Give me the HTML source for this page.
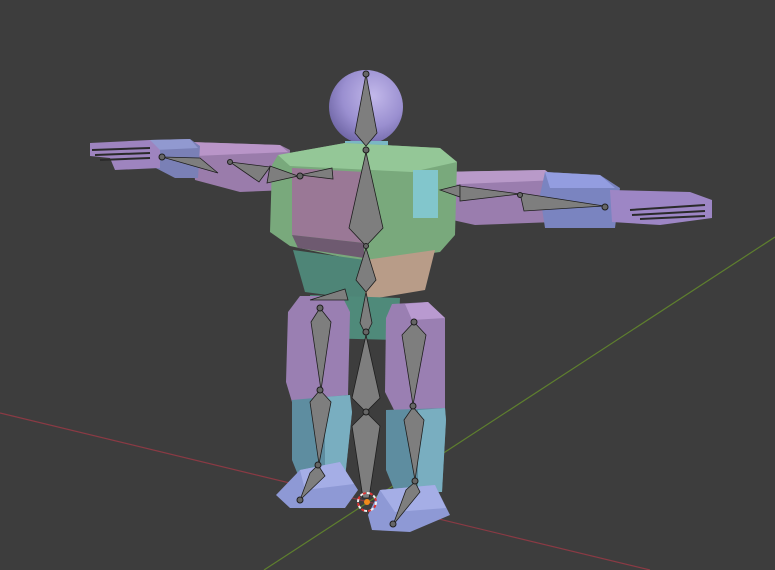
<!DOCTYPE html>
<html><head><meta charset="utf-8"><style>
html,body{margin:0;padding:0;background:#3d3d3d;width:775px;height:570px;overflow:hidden}
svg{display:block}
</style></head><body>
<svg width="775" height="570" viewBox="0 0 775 570" xmlns="http://www.w3.org/2000/svg">
<defs>
<radialGradient id="hd" cx="0.6" cy="0.35" r="0.7"><stop offset="0" stop-color="#c2b8ea"/><stop offset="0.6" stop-color="#9a8fd0"/><stop offset="1" stop-color="#6d64a3"/></radialGradient>
</defs>
<rect width="775" height="570" fill="#3d3d3d"/>
<line x1="0" y1="413" x2="650" y2="570" stroke="#8a3a44" stroke-width="1.2"/>
<line x1="264" y1="570" x2="775" y2="237" stroke="#5e7f2e" stroke-width="1.2"/>

<!-- left arm -->
<polygon points="190,142 280,145 290,150 288,190 240,192 195,180" fill="#9a7cab"/>
<polygon points="190,142 280,145 288,152 195,156" fill="#b995c8"/>
<polygon points="150,140 190,139 200,146 198,178 175,178 150,165" fill="#7a80b6"/>
<polygon points="150,140 190,139 198,148 155,150" fill="#9199d0"/>
<polygon points="90,143 150,140 160,150 160,168 115,170 110,158 90,156" fill="#9e84bf"/>
<!-- right arm -->
<polygon points="418,168 440,165 445,215 420,218" fill="#78c0c8"/>
<polygon points="435,172 545,170 560,182 555,222 475,225 430,215" fill="#9a7dae"/>
<polygon points="435,172 545,170 558,180 438,185" fill="#b99ac9"/>
<polygon points="545,172 600,175 620,188 615,228 545,228 540,195" fill="#7a84c0"/>
<polygon points="545,172 600,175 615,188 550,188" fill="#939de0"/>
<polygon points="610,190 690,192 712,200 712,218 660,225 612,222" fill="#9d86c5"/>

<!-- head -->
<circle cx="366" cy="107" r="37" fill="url(#hd)"/>
<rect x="345" y="141" width="43" height="10" fill="#7ab7c4"/>

<!-- torso -->
<polygon points="278,155 345,143 440,148 457,162 455,235 440,252 365,262 290,246 270,232 272,165" fill="#79a97c"/>
<polygon points="278,155 345,143 440,148 457,162 412,172 290,166" fill="#94c797"/>
<polygon points="292,168 364,172 364,243 292,235" fill="#9a7896"/>
<polygon points="292,235 364,243 364,258 298,248" fill="#6e5a70"/>
<rect x="413" y="170" width="25" height="48" fill="#82c6cc"/>
<!-- waist -->
<polygon points="293,250 365,260 365,300 305,292" fill="#4e8577"/>
<polygon points="365,260 435,250 425,290 365,300" fill="#b89c88"/>
<polygon points="310,295 400,298 398,340 318,338" fill="#4f8a7a"/>
<!-- legs upper -->
<polygon points="300,296 342,296 350,312 348,395 292,402 286,382 288,312" fill="#9a7fb2"/>
<polygon points="392,304 428,302 445,318 445,408 395,412 385,392 386,318" fill="#9a7fb2"/>
<polygon points="405,304 428,302 445,318 412,320" fill="#b99ad0"/>
<!-- legs lower -->
<polygon points="292,400 348,395 352,412 345,478 300,480 292,460" fill="#5e8da0"/>
<polygon points="325,397 350,395 352,412 345,478 325,478" fill="#79aec0"/>
<polygon points="386,410 445,408 446,420 442,492 395,492 386,470" fill="#5e8da0"/>
<polygon points="418,410 445,408 446,420 442,492 418,492" fill="#79aec0"/>
<!-- feet -->
<polygon points="300,470 340,462 358,490 345,508 290,508 276,495" fill="#8e99d5"/>
<polygon points="300,470 340,462 354,484 305,490" fill="#a5aee6"/>
<polygon points="380,490 435,485 450,515 410,532 372,530 368,515" fill="#8e99d5"/>
<polygon points="380,490 435,485 446,508 395,512" fill="#a5aee6"/>

<!-- bones -->
<g fill="#7e7e7e" stroke="#1e1e1e" stroke-width="0.8">
<polygon points="366,74 377,133 366,146 355,133"/>
<polygon points="366,152 383,228 366,246 349,228"/>
<polygon points="366,248 376,280 366,292 356,280"/>
<polygon points="366,292 372,323 366,335 360,323"/>
<polygon points="366,335 380,398 366,412 352,398"/>
<polygon points="366,412 380,426 369,498 363,498 352,426"/>
<polygon points="320,308 331,322 321,390 311,322"/>
<polygon points="320,390 331,402 319,464 310,402"/>
<polygon points="318,465 325,476 300,500 310,473"/>
<polygon points="414,322 426,335 413,405 402,335"/>
<polygon points="413,407 424,420 415,480 404,420"/>
<polygon points="415,482 420,492 393,525 406,490"/>
<polygon points="300,175 332,168 333,179"/>
<polygon points="298,176 270,166 267,183"/>
<polygon points="230,162 270,167 259,182"/>
<polygon points="162,157 200,158 218,173"/>
<polygon points="440,190 460,185 460,197"/>
<polygon points="460,186 520,194 460,201"/>
<polygon points="520,193 604,206 524,211"/>
<polygon points="310,300 345,289 348,300"/>
</g>
<g fill="#666" stroke="#1e1e1e" stroke-width="1">
<circle cx="366" cy="74" r="3"/><circle cx="366" cy="150" r="3"/><circle cx="366" cy="246" r="2.5"/>
<circle cx="366" cy="332" r="3"/><circle cx="366" cy="412" r="3"/><circle cx="320" cy="308" r="3"/>
<circle cx="320" cy="390" r="3"/><circle cx="318" cy="465" r="3"/><circle cx="300" cy="500" r="3"/>
<circle cx="414" cy="322" r="3"/><circle cx="413" cy="406" r="3"/><circle cx="415" cy="481" r="3"/>
<circle cx="393" cy="524" r="3"/><circle cx="300" cy="176" r="3"/><circle cx="230" cy="162" r="2.5"/>
<circle cx="162" cy="157" r="3"/><circle cx="605" cy="207" r="3"/><circle cx="520" cy="195" r="2.5"/>
</g>
<!-- fingers -->
<g stroke="#2a2a2a" stroke-width="2">
<line x1="92" y1="150" x2="150" y2="148"/><line x1="95" y1="155" x2="150" y2="153"/><line x1="100" y1="160" x2="150" y2="158"/>
<line x1="630" y1="210" x2="705" y2="205"/><line x1="632" y1="215" x2="705" y2="211"/><line x1="640" y1="219" x2="705" y2="216"/>
</g>
<!-- origin -->
<circle cx="367" cy="502" r="9" fill="none" stroke="#eee" stroke-width="2" stroke-dasharray="4 3"/>
<circle cx="367" cy="502" r="9" fill="none" stroke="#d33" stroke-width="2" stroke-dasharray="3 4" stroke-dashoffset="4"/>
<circle cx="367" cy="502" r="3" fill="#f08a1c"/>
</svg>
</body></html>
